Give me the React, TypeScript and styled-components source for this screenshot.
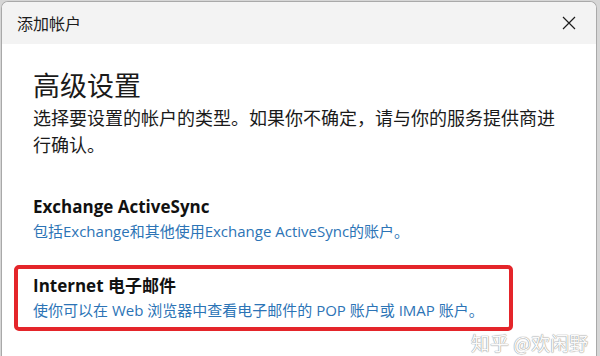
import React from 'react';
import styled, { createGlobalStyle } from 'styled-components';

const GlobalStyle = createGlobalStyle`
  body {
    margin: 0;
    background: #d6d6d6;
    font-family: "Open Sans", "Noto Sans CJK SC", sans-serif;
  }
`

const Page = styled.div`
  width: 600px;
  height: 356px;
  padding: 1px 3px 0 1px;
  box-sizing: border-box;
  position: relative;
  overflow: hidden;
`

const Window = styled.div`
  height: 100%;
  background: #fff;
  border: 1px solid #a9a9a9;
  border-bottom: none;
  border-radius: 7px 7px 0 0;
  overflow: hidden;
`

const TitleBar = styled.div`
  height: 42px;
  background: #f3f3f3;
  display: flex;
  align-items: center;
  justify-content: space-between;
  padding: 0 20px 0 15px;
`

const Title = styled.span`
  font-size: 16px;
  color: #1c1c1c;
  font-family: "Noto Sans CJK SC", sans-serif;
`

const CloseIcon = () => (
  <svg width="14" height="14" viewBox="0 0 14 14">
    <path d="M1 1 L13 13 M13 1 L1 13" stroke="#1c1c1c" strokeWidth="1.2" fill="none" />
  </svg>
)

const Content = styled.div`
  padding: 24px 31px 0 31px;
`

const Heading = styled.h1`
  margin: 0;
  font-size: 27px;
  font-weight: 400;
  line-height: 34px;
  color: #1a1a1a;
  font-family: "Noto Sans CJK SC", sans-serif;
`

const Desc = styled.p`
  margin: 2px 0 0;
  font-size: 18px;
  line-height: 27px;
  color: #1a1a1a;
  font-family: "Noto Sans CJK SC", sans-serif;
`

const Options = styled.div`
  margin-top: 37px;
  display: flex;
  flex-direction: column;
  gap: 22px;
`

const Option = styled.div<{ $marked?: boolean }>`
  width: ${p => (p.$marked ? '499px' : 'auto')};
  box-sizing: border-box;
  margin-left: ${p => (p.$marked ? '-19px' : '0')};
  padding: ${p => (p.$marked ? '5px 15px' : '0')};
  border: ${p => (p.$marked ? '4px solid #e4252a' : 'none')};
  border-radius: 5px;
`

const OptionTitle = styled.div`
  font-size: 17px;
  font-weight: 700;
  line-height: 24px;
  color: #111;
`

const OptionText = styled.div`
  font-size: 15px;
  line-height: 24px;
  color: #2c74b6;
  white-space: nowrap;
`

const Watermark = styled.div`
  position: absolute;
  left: 471px;
  top: 331px;
  font-size: 19px;
  line-height: 24px;
  color: #fafafa;
  text-shadow: 0 0 1px #8f8f8f, 0 0 1px #8f8f8f;
  font-family: "Noto Sans CJK SC", sans-serif;
`

const App = () => (
  <>
    <GlobalStyle />
    <Page>
      <Window>
        <TitleBar>
          <Title>添加帐户</Title>
          <CloseIcon />
        </TitleBar>
        <Content>
          <Heading>高级设置</Heading>
          <Desc>选择要设置的帐户的类型。如果你不确定，请与你的服务提供商进行确认。</Desc>
          <Options>
            <Option>
              <OptionTitle>Exchange ActiveSync</OptionTitle>
              <OptionText>包括Exchange和其他使用Exchange ActiveSync的账户。</OptionText>
            </Option>
            <Option $marked>
              <OptionTitle>Internet 电子邮件</OptionTitle>
              <OptionText>使你可以在 Web 浏览器中查看电子邮件的 POP 账户或 IMAP 账户。</OptionText>
            </Option>
          </Options>
        </Content>
      </Window>
      <Watermark>知乎 @欢闲野</Watermark>
    </Page>
  </>
)

export default App;
